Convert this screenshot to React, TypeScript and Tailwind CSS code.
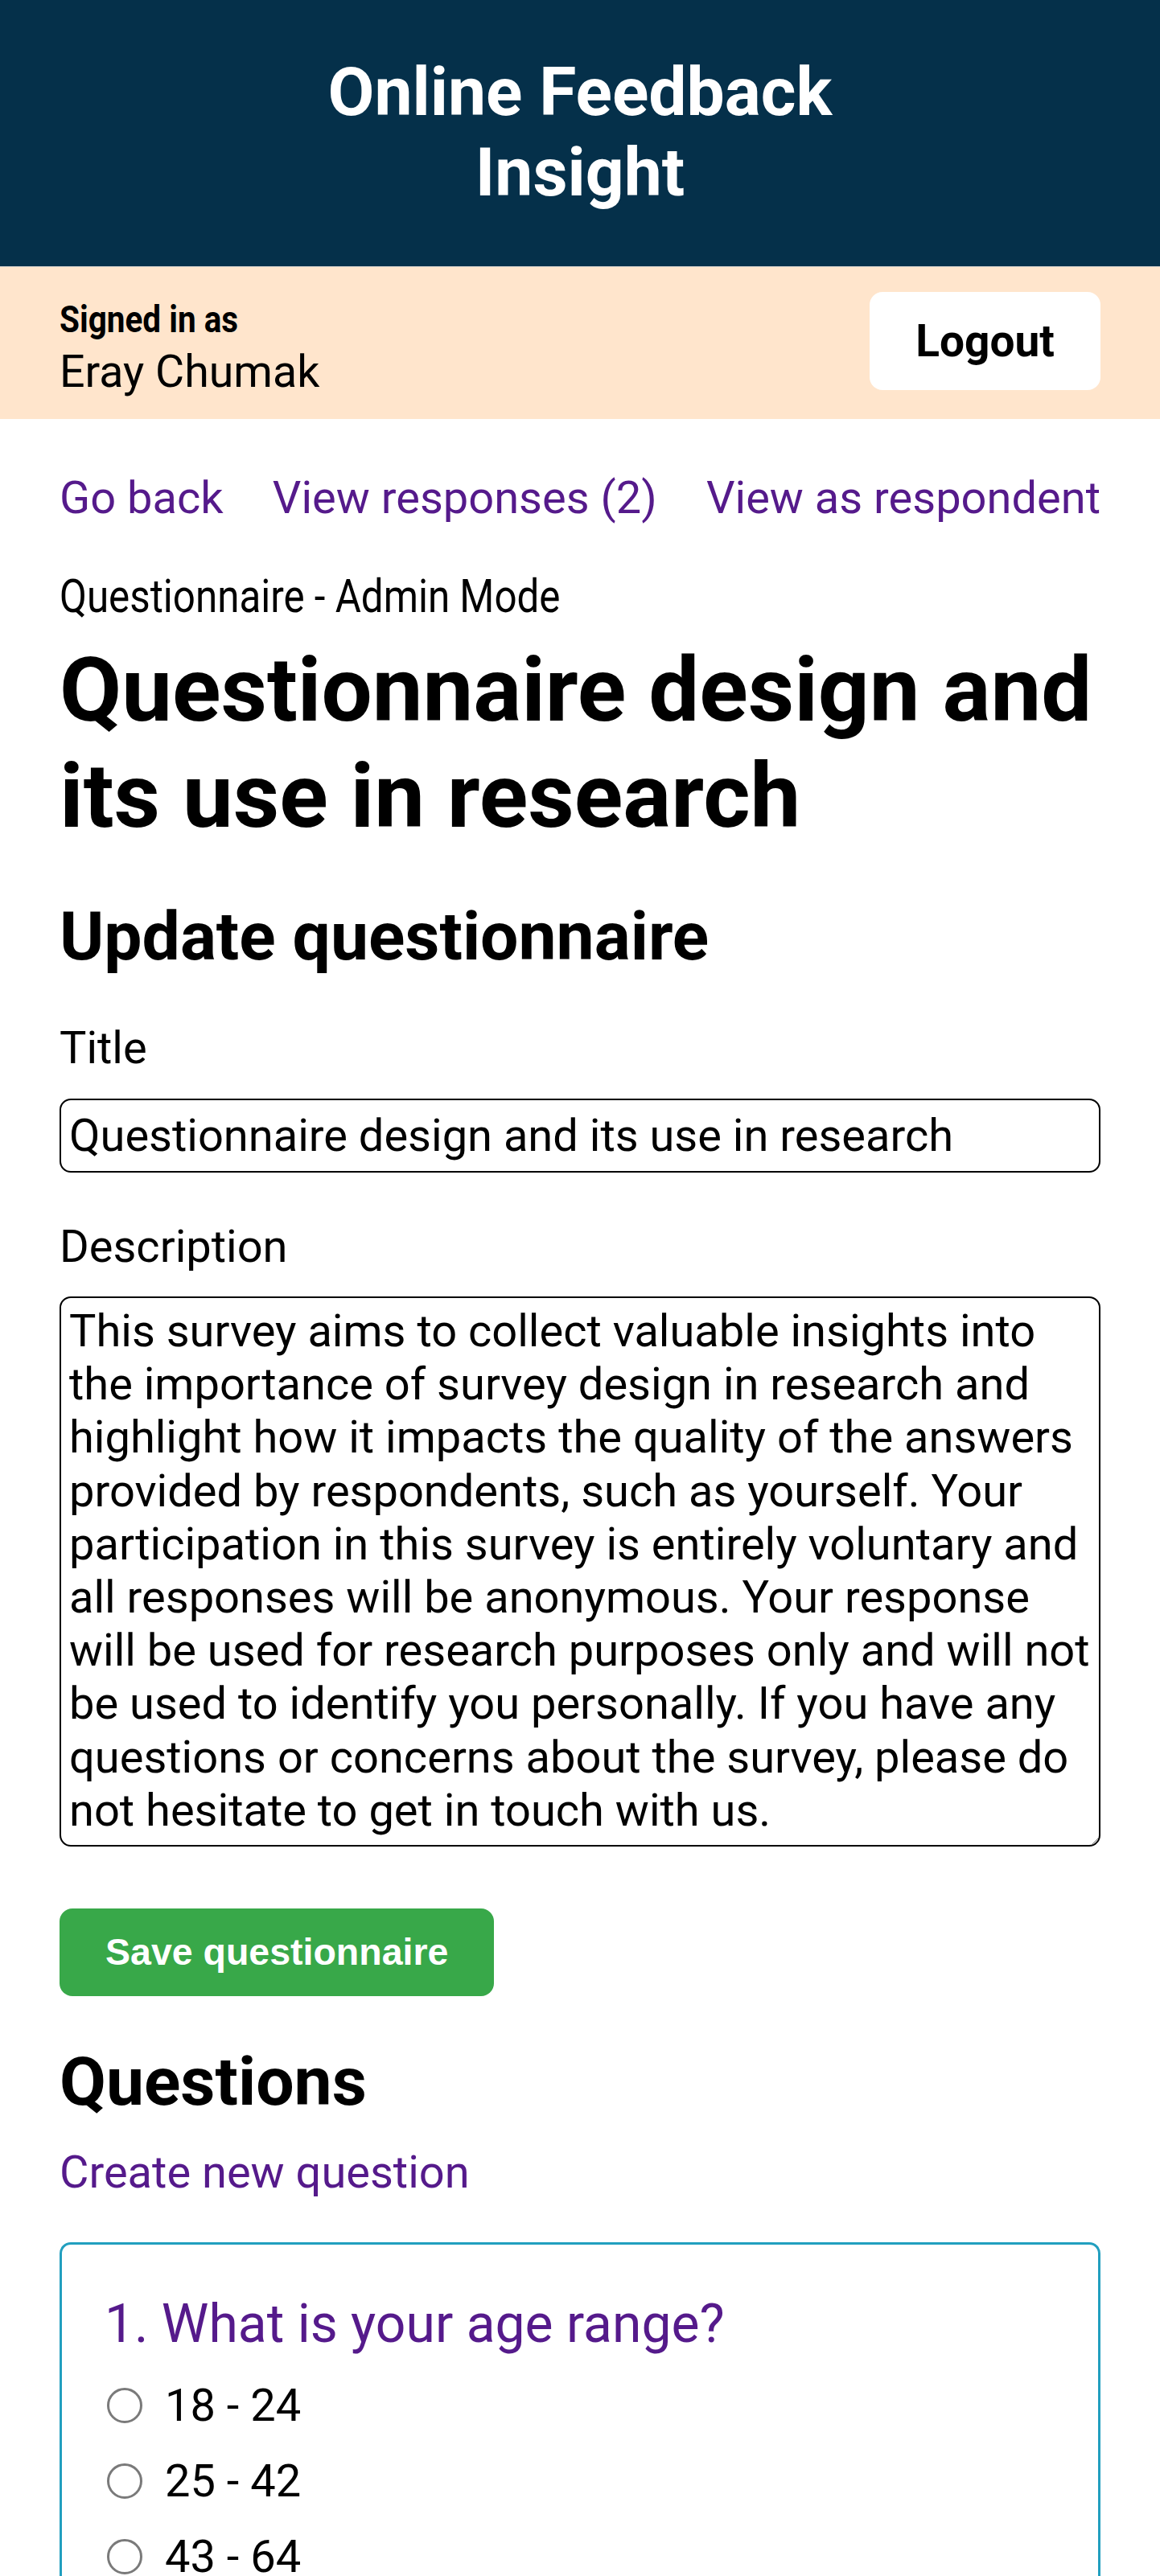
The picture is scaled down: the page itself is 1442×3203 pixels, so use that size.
const description =
  "This survey aims to collect valuable insights into the importance of survey design in research and highlight how it impacts the quality of the answers provided by respondents, such as yourself. Your participation in this survey is entirely voluntary and all responses will be anonymous. Your response will be used for research purposes only and will not be used to identify you personally. If you have any questions or concerns about the survey, please do not hesitate to get in touch with us."

const options = ["18 - 24", "25 - 42", "43 - 64", "65 and over"]

export default function App() {
  return (
    <div className="h-[3203px] overflow-hidden bg-white font-['Roboto',sans-serif] text-black">
      {/* top banner */}
      <header className="h-[332px] border-b border-[#c9c9c9] bg-[#05304a] pt-[65px]">
        <h1 className="mx-auto max-w-[720px] text-center text-[84px] leading-[100px] font-bold text-white">
          Online Feedback Insight
        </h1>
      </header>

      {/* signed in bar */}
      <div className="flex h-[189px] items-start justify-between bg-[#ffe5cc] px-[74px]">
        <div className="pt-[39px]">
          <p className="origin-left scale-x-[0.88] text-[46px] leading-[52px] font-bold">Signed in as</p>
          <p className="mt-[6px] text-[55.5px] leading-[67px]">Eray Chumak</p>
        </div>
        <button className="mt-[31px] h-[122px] w-[287px] rounded-[16px] bg-white font-['Roboto',sans-serif] text-[55px] font-bold text-black">
          Logout
        </button>
      </div>

      <main className="px-[74px]">
        <nav className="mt-[65px] flex justify-between text-[56px] leading-[66px] text-[#551a8b]">
          <a href="#">Go back</a>
          <a href="#">View responses (2)</a>
          <a href="#">View as respondent</a>
        </nav>

        <p className="mt-[57px] origin-left scale-x-[0.865] text-[57px] leading-[66px]">Questionnaire - Admin Mode</p>
        <h1 className="mt-[17px] text-[112px] leading-[132px] font-bold">
          Questionnaire design and its use in research
        </h1>

        <h2 className="mt-[60px] text-[84px] leading-[98px] font-bold">Update questionnaire</h2>

        <form>
          <label className="mt-[56px] block text-[56px] leading-[66px]">Title</label>
          <input
            className="mt-[30px] block h-[92px] w-full rounded-[14px] border-2 border-black px-[10px] font-['Roboto',sans-serif] text-[56px] text-black"
            defaultValue="Questionnaire design and its use in research"
          />

          <label className="mt-[59px] block text-[56px] leading-[66px]">Description</label>
          <textarea
            className="mt-[29px] block h-[684px] w-full rounded-[14px] border-2 border-black pt-[8px] pr-[2px] pl-[10px] font-['Roboto',sans-serif] text-[56px] leading-[66.2px] text-black"
            defaultValue={description}
          />

          <button
            type="button"
            className="mt-[77px] block h-[109px] rounded-[16px] bg-[#38a849] px-[57px] font-['Liberation_Sans',Arial,sans-serif] text-[46.5px] font-bold text-white"
          >
            Save questionnaire
          </button>
        </form>

        <h2 className="mt-[58px] text-[84px] leading-[98px] font-bold">Questions</h2>
        <a href="#" className="mt-[30px] block text-[56px] leading-[66px] text-[#551a8b]">
          Create new question
        </a>

        {/* question card */}
        <div className="mt-[54px] rounded-[14px] border-[3px] border-[#229fbf] pt-[60px] pr-[53px] pb-[60px] pl-[53px]">
          <h3 className="text-[66px] leading-[77px] text-[#551a8b]">1. What is your age range?</h3>
          <div className="mt-[30px] flex flex-col gap-[28px]">
            {options.map((o) => (
              <div key={o} className="flex h-[66px] items-center gap-[28px]">
                <span className="ml-[3px] h-[44px] w-[44px] shrink-0 rounded-full border-[3px] border-[#7a7a7a] bg-white" />
                <span className="text-[56px] leading-[66px]">{o}</span>
              </div>
            ))}
          </div>
        </div>
      </main>
    </div>
  )
}
